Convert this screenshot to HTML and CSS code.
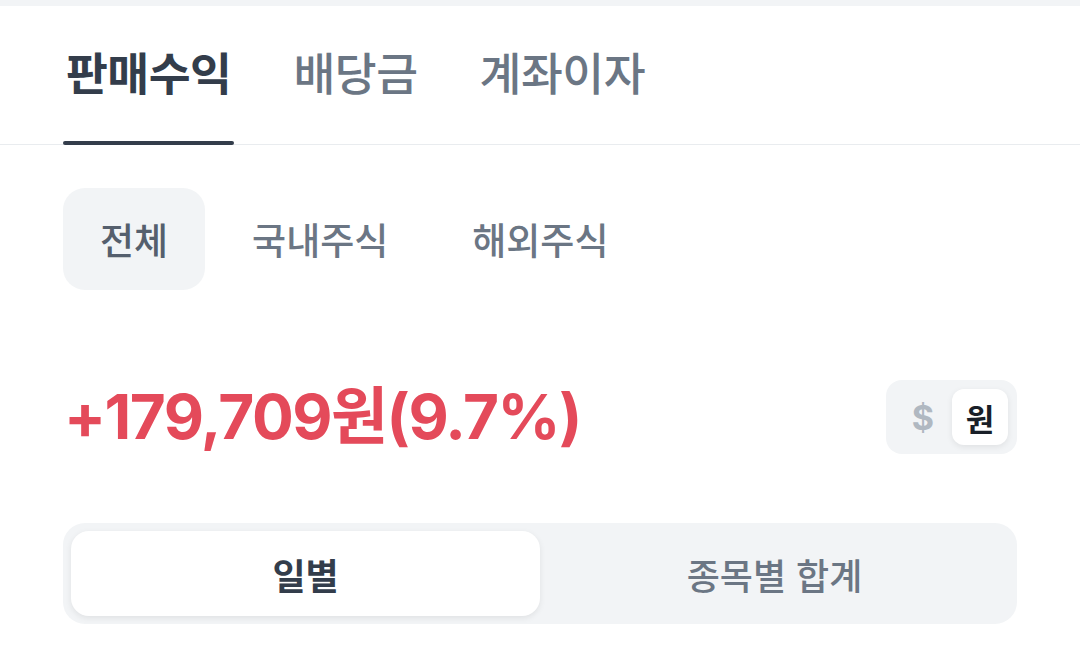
FILE: index.html
```html
<!DOCTYPE html>
<html lang="ko">
<head>
<meta charset="utf-8">
<link rel="stylesheet" href="styles.css">
</head>
<body>
<div class="top-strip"></div>
<nav class="tabs">
  <div class="tab active">판매수익</div>
  <div class="tab">배당금</div>
  <div class="tab">계좌이자</div>
</nav>
<div class="chips">
  <div class="chip active">전체</div>
  <div class="chip">국내주식</div>
  <div class="chip">해외주식</div>
</div>
<div class="amount-row">
  <div class="amount">+179,709원(9.7%)</div>
  <div class="currency">
    <div class="cur-item dollar">$</div>
    <div class="cur-item selected">원</div>
  </div>
</div>
<div class="segment">
  <div class="seg-item selected">일별</div>
  <div class="seg-item">종목별 합계</div>
</div>
</body>
</html>
```
FILE: styles.css
```css
* { box-sizing: border-box; }
html, body { margin: 0; padding: 0; background: #fff; }
body {
  width: 1080px;
  height: 657px;
  overflow: hidden;
  font-family: "Noto Sans CJK KR", "Noto Sans", sans-serif;
  color: #333d4b;
}
.top-strip { height: 6px; background: #f2f4f6; }
.tabs {
  display: flex;
  height: 139px;
  padding: 0 0 0 63px;
  gap: 56px;
  border-bottom: 1px solid #e9ecef;
}
.tab {
  position: relative;
  display: flex;
  align-items: center;
  padding: 0 3px 9px;
  font-size: 45.5px;
  font-weight: 500;
  color: #6b7684;
  letter-spacing: -0.5px;
}
.tab.active { color: #333d4b; font-weight: 700; }
.tab.active::after {
  content: "";
  position: absolute;
  left: 0;
  right: 0;
  bottom: -1px;
  height: 4px;
  border-radius: 2px;
  background: #333d4b;
}
.chips {
  display: flex;
  gap: 10px;
  padding: 0 0 0 63px;
  margin-top: 43px;
}
.chip {
  height: 102px;
  padding: 0 37px;
  border-radius: 22px;
  display: flex;
  align-items: center;
  font-size: 37px;
  font-weight: 500;
  color: #6b7684;
}
.chip.active { background: #f2f4f6; color: #555f6d; }
.amount-row {
  display: flex;
  justify-content: space-between;
  align-items: center;
  padding: 0 63px;
  margin-top: 90px;
}
.amount {
  font-family: "Inter", "Noto Sans CJK KR", sans-serif;
  font-size: 62px;
  line-height: 1;
  font-weight: 700;
  color: #e44a5a;
  letter-spacing: -1.5px;
  margin-left: 1px;
}
.currency {
  display: flex;
  gap: 1px;
  padding: 9px;
  background: #f2f4f6;
  border-radius: 16px;
}
.cur-item {
  width: 56px;
  height: 56px;
  display: flex;
  align-items: center;
  justify-content: center;
  font-size: 31px;
  font-weight: 700;
  color: #191f28;
  border-radius: 12px;
}
.cur-item.dollar {
  font-family: "Inter", sans-serif;
  font-size: 34px;
  color: #b0b8c1;
}
.cur-item.selected {
  background: #fff;
  box-shadow: 0 2px 6px rgba(0,0,0,0.08);
}
.segment {
  display: flex;
  margin: 69px 63px 0;
  height: 101px;
  padding: 8px;
  background: #f2f4f6;
  border-radius: 22px;
}
.seg-item {
  flex: 1;
  display: flex;
  align-items: center;
  justify-content: center;
  font-size: 36px;
  font-weight: 500;
  color: #6b7684;
  border-radius: 18px;
}
.seg-item.selected {
  background: #fff;
  color: #333d4b;
  font-weight: 700;
  box-shadow: 0 2px 6px rgba(0,0,0,0.08);
}
```
